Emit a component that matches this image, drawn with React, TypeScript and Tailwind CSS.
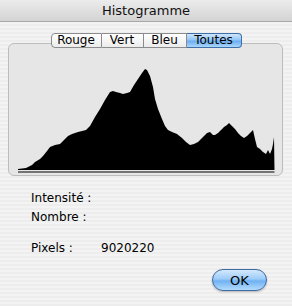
import React from 'react';

const tabs = [
  { label: 'Rouge', w: 'w-[51px]' },
  { label: 'Vert', w: 'w-[42px]' },
  { label: 'Bleu', w: 'w-[43px]' },
  { label: 'Toutes', w: 'w-[55px]' },
];

// histogram outline, in window pixel coordinates
const curve: [number, number][] = [
  [18, 170], [26, 169], [28, 168], [32, 166], [35, 163], [40, 160], [43, 157],
  [47, 152], [50, 148], [55, 146], [60, 145], [64, 141], [68, 137], [72, 135],
  [78, 133], [82, 132], [86, 131], [90, 127], [95, 118], [100, 110], [105, 101],
  [110, 93], [113, 92], [116, 93], [120, 94], [123, 95], [127, 94], [130, 93],
  [134, 86], [138, 80], [142, 74], [145, 70], [147, 71], [150, 77], [153, 88],
  [155, 100], [158, 110], [162, 120], [165, 127], [168, 131], [172, 133],
  [177, 135], [182, 139], [186, 143], [190, 146], [194, 145], [198, 143],
  [201, 140], [204, 137], [207, 134], [210, 133], [213, 136], [215, 136],
  [218, 134], [221, 131], [224, 128], [227, 126], [229, 124], [232, 127],
  [235, 130], [238, 134], [241, 137], [244, 139], [247, 137], [250, 134],
  [253, 131], [255, 140], [257, 148], [260, 150], [263, 153], [266, 155],
  [268, 151], [270, 155], [272, 150], [273, 145], [274, 138], [274.5, 171],
  [18, 171],
];

const Histogram: React.FC = () => (
  <svg width="273" height="131" viewBox="9 45 273 131" className="block">
    <polygon points={curve.map(p => p.join(',')).join(' ')} fill="#000" />
    <rect x="18" y="172.5" width="256.5" height="1" fill="#000" />
  </svg>
);

const App: React.FC = () => {
  return (
    <div className="w-[292px] h-[306px] flex flex-col overflow-hidden font-['DejaVu_Sans',sans-serif] text-black bg-[repeating-linear-gradient(180deg,#ededed_0px,#ededed_2px,#f3f3f3_2px,#f3f3f3_4px)]">
      {/* Title bar */}
      <div className="h-[22px] shrink-0 flex items-center justify-center border-b border-[#a9a9a9] bg-gradient-to-b from-[#ececec] to-[#d3d3d3] text-[13px] leading-none text-[#111]">
        Histogramme
      </div>

      {/* Segmented control */}
      <div className="relative z-10 mt-[11px] flex justify-center">
        <div className="flex h-[15px] text-[12px] leading-[13px]">
          {tabs.map((t, i) => {
            const selected = t.label === 'Toutes';
            const first = i === 0;
            const last = i === tabs.length - 1;
            return (
              <div
                key={t.label}
                className={`${t.w} flex items-center justify-center border-y ${
                  first ? 'border-l rounded-l-[4px]' : ''
                } ${last ? 'border-r rounded-r-[4px]' : 'border-r'} ${
                  selected
                    ? 'border-[#3f6fa8] bg-[linear-gradient(180deg,#cfe6fd_0%,#93c6f7_45%,#6aaef1_55%,#a9d6fc_100%)]'
                    : 'border-[#8c8c8c] bg-gradient-to-b from-white to-[#ececec]'
                }`}
              >
                {t.label}
              </div>
            );
          })}
        </div>
      </div>

      {/* Histogram panel */}
      <div className="-mt-[5px] ml-[8px] w-[275px] h-[133px] shrink-0 rounded-[6px] border border-[#bcbcbc] bg-[#e6e6e6] overflow-hidden">
        <Histogram />
      </div>

      {/* Info */}
      <div className="ml-[31px] mt-[13px] text-[12px] leading-[19px]">
        <div>Intensité :</div>
        <div>Nombre :</div>
        <div className="mt-[12px] flex">
          <span className="w-[70px]">Pixels :</span>
          <span>9020220</span>
        </div>
      </div>

      {/* Button */}
      <div className="mt-[11px] flex justify-end pr-[25px]">
        <button className="w-[55px] h-[22px] rounded-full border border-[#3d68a0] bg-[linear-gradient(180deg,#d4e9fd_0%,#9ccbf8_45%,#6fb1f2_55%,#b4dcfd_100%)] text-[13px] leading-none shadow-[0_1px_2px_rgba(0,0,0,0.25)]">
          OK
        </button>
      </div>
    </div>
  );
};

export default App;
